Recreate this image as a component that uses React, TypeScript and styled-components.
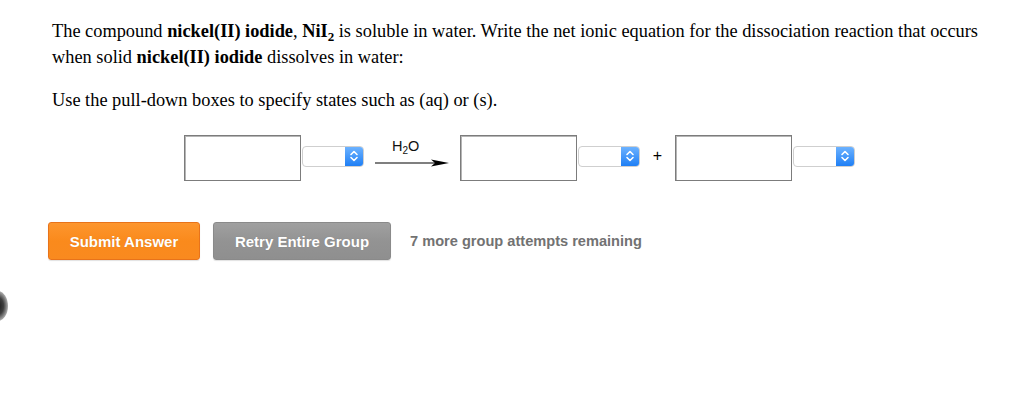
import React from "react";
import styled, { createGlobalStyle } from "styled-components";

const Global = createGlobalStyle`
  html, body { margin: 0; padding: 0; background: #fff; }
  body { font-family: "Liberation Serif", "Times New Roman", serif; color: #000; }
`;

const Page = styled.div`
  position: relative;
  width: 1024px;
  height: 400px;
  box-sizing: border-box;
  padding: 18px 0 0 52px;
  overflow: hidden;
`;

const Para = styled.p<{ gap?: number }>`
  margin: 0 0 ${(p) => p.gap ?? 0}px 0;
  font-size: 18.35px;
  line-height: 26px;
  width: 945px;
`;

const Sub = styled.sub`
  font-size: 13px;
  vertical-align: -4px;
  line-height: 0;
`;

const EquationRow = styled.div`
  display: flex;
  align-items: center;
  margin: 22px 0 0 132px;
  height: 46px;
`;

const AnswerBox = styled.div`
  width: 117px;
  height: 46px;
  box-sizing: border-box;
  border: 1px solid #7c7c7c;
  box-shadow: inset 0 1px 0 #b5b5b5, inset 1px 0 0 #b5b5b5;
  background: #fff;
`;

const Select = styled.div<{ ml?: number }>`
  display: flex;
  width: 62px;
  height: 21px;
  margin: 0 0 0 ${(p) => p.ml ?? 1}px;
  box-sizing: border-box;
  border: 1px solid #cfcfcf;
  border-radius: 4px;
  background: #fff;
  overflow: hidden;
  position: relative;
  top: -2px;
`;

const SelectField = styled.div`
  flex: 1;
`;

const SelectButton = styled.div`
  width: 18px;
  display: flex;
  align-items: center;
  justify-content: center;
  background: linear-gradient(#6cb2ff, #1f7ff5);
`;

const Arrow = styled.div`
  position: relative;
  width: 74px;
  height: 46px;
  margin: 0 11px 0 11px;
`;

const ArrowLabel = styled.div`
  position: absolute;
  left: 17px;
  top: 4px;
  font-family: "Liberation Sans", Arial, sans-serif;
  font-size: 14.5px;
  line-height: 15px;
  color: #111;
`;

const ArrowLabelSub = styled.span`
  font-size: 10px;
  position: relative;
  top: 3px;
`;

const ArrowSvg = styled.svg`
  position: absolute;
  left: 0;
  top: 24px;
`;

const Plus = styled.div`
  font-family: "Liberation Sans", Arial, sans-serif;
  font-size: 16px;
  width: 35px;
  text-align: center;
  color: #000;
  position: relative;
  top: -2px;
`;

const ButtonRow = styled.div`
  display: flex;
  align-items: center;
  margin: 41px 0 0 -4px;
`;

const Button = styled.div<{ variant: "orange" | "gray" }>`
  box-sizing: border-box;
  height: 38px;
  width: ${(p) => (p.variant === "orange" ? 152 : 178)}px;
  margin-right: ${(p) => (p.variant === "orange" ? 13 : 19)}px;
  display: flex;
  align-items: center;
  justify-content: center;
  border-radius: 3px;
  font-family: "Liberation Sans", Arial, sans-serif;
  font-weight: bold;
  font-size: 15px;
  color: #fff;
  text-shadow: 0 0 1px rgba(0, 0, 0, 0.15);
  border: 1px solid ${(p) => (p.variant === "orange" ? "#e8731a" : "#8a8a8a")};
  background: ${(p) =>
    p.variant === "orange"
      ? "linear-gradient(#fd962e, #fa8a1c 50%, #f98a1f)"
      : "linear-gradient(#a0a0a0, #939393 50%, #8f8f8f)"};
  box-shadow: 0 1px 1px rgba(0, 0, 0, 0.12);
`;

const Remaining = styled.div`
  font-family: "Liberation Sans", Arial, sans-serif;
  font-weight: bold;
  font-size: 14.6px;
  color: #727272;
`;

const EdgeBlob = styled.div`
  position: absolute;
  left: -12px;
  top: 291px;
  width: 20px;
  height: 30px;
  border-radius: 50%;
  background: radial-gradient(ellipse at center, rgba(0,0,0,0.9) 0%, rgba(0,0,0,0.75) 40%, rgba(0,0,0,0.25) 75%, rgba(0,0,0,0) 100%);
`;

const Chevrons = () => (
  <svg width="10" height="14" viewBox="0 0 10 14">
    <path d="M2 5.5 L5 2.5 L8 5.5" fill="none" stroke="#fff" strokeWidth="1.6" strokeLinecap="round" strokeLinejoin="round" />
    <path d="M2 8.5 L5 11.5 L8 8.5" fill="none" stroke="#fff" strokeWidth="1.6" strokeLinecap="round" strokeLinejoin="round" />
  </svg>
);

const StateSelect = ({ ml }: { ml?: number }) => (
  <Select ml={ml}>
    <SelectField />
    <SelectButton>
      <Chevrons />
    </SelectButton>
  </Select>
);

export default function App() {
  return (
    <>
      <Global />
      <Page>
        <Para gap={17}>
          The compound <b>nickel(II) iodide</b>, <b>NiI<Sub>2</Sub></b> is soluble in water. Write the net
          ionic equation for the dissociation reaction that occurs when solid <b>nickel(II) iodide</b> dissolves
          in water:
        </Para>
        <Para>Use the pull-down boxes to specify states such as (aq) or (s).</Para>
        <EquationRow>
          <AnswerBox />
          <StateSelect />
          <Arrow>
            <ArrowLabel>
              H<ArrowLabelSub>2</ArrowLabelSub>O
            </ArrowLabel>
            <ArrowSvg width="74" height="8" viewBox="0 0 74 8">
              <line x1="0" y1="4" x2="62" y2="4" stroke="#000" strokeWidth="1.2" />
              <path d="M56 0.5 L74 4 L56 7.5 L60 4 Z" fill="#000" />
            </ArrowSvg>
          </Arrow>
          <AnswerBox />
          <StateSelect />
          <Plus>+</Plus>
          <AnswerBox />
          <StateSelect />
        </EquationRow>
        <ButtonRow>
          <Button variant="orange">Submit Answer</Button>
          <Button variant="gray">Retry Entire Group</Button>
          <Remaining>7 more group attempts remaining</Remaining>
        </ButtonRow>
        <EdgeBlob />
      </Page>
    </>
  );
}
